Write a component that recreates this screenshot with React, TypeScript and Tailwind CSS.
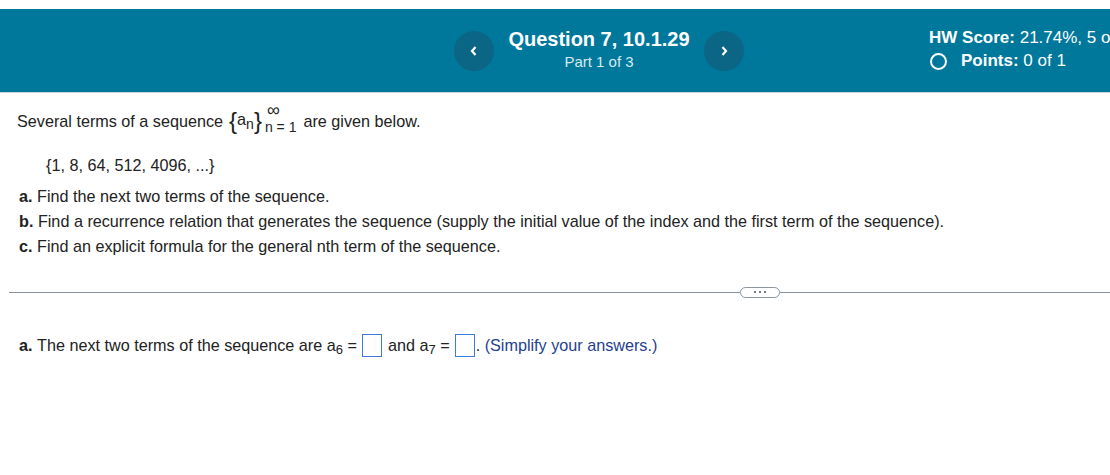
import React from "react";

const Header: React.FC = () => {
  return (
    <div className="mt-[9px] h-[84px] bg-[#00789c] border-b border-[#c5d6df] flex items-center">
      <div className="ml-[454px] flex items-center">
        <button className="w-10 h-10 rounded-full bg-[#0b6585] flex items-center justify-center text-white">
          <svg width="10" height="12" viewBox="0 0 10 12">
            <path d="M6.5 2 L3 6 L6.5 10" stroke="white" strokeWidth="2.2" fill="none" />
          </svg>
        </button>
        <div className="w-[210px] flex flex-col items-center -mt-[2px]">
          <div className="text-[20px] font-bold text-white leading-[22px]">Question 7, 10.1.29</div>
          <div className="text-[15px] text-[#d6eaf2] leading-[18px] mt-[3px]">Part 1 of 3</div>
        </div>
        <button className="w-10 h-10 rounded-full bg-[#0b6585] flex items-center justify-center text-white">
          <svg width="10" height="12" viewBox="0 0 10 12">
            <path d="M3.5 2 L7 6 L3.5 10" stroke="white" strokeWidth="2.2" fill="none" />
          </svg>
        </button>
      </div>
      <div className="ml-[185px] flex flex-col text-white text-[17px] whitespace-nowrap -mt-[2px]">
        <div className="leading-[20px]">
          <span className="font-bold">HW Score:</span> 21.74%, 5 of 23
        </div>
        <div className="flex items-center leading-[20px] mt-[3px]">
          <span className="w-[17px] h-[17px] rounded-full border-2 border-white inline-block mr-[14px] ml-[1px]"></span>
          <span className="font-bold">Points:</span>&nbsp;0 of 1
        </div>
      </div>
    </div>
  );
};

const AnswerBox: React.FC<{ last?: boolean }> = ({ last }) => (
  <span
    className={
      last
        ? "inline-block w-[20px] h-[23px] border border-[#3d7bd9] align-middle bg-white ml-[5px] mr-[1px]"
        : "inline-block w-[20px] h-[23px] border border-[#3d7bd9] align-middle bg-white ml-[5px] mr-[6px]"
    }
  ></span>
);

export default function App() {
  return (
    <div
      className="w-[1110px] h-[475px] bg-white overflow-hidden text-[#222]"
      style={{ fontFamily: '"Liberation Sans", Arial, sans-serif' }}
    >
      <Header />
      <div className="pl-[17px] pt-[14px] text-[16.2px]">
        <div className="flex items-center h-[28px]">
          <span>Several terms of a sequence</span>
          <span className="ml-[6px] inline-flex items-center">
            <span className="text-[24px] leading-none font-light">{"{"}</span>
            <span className="relative top-[-2px]">a</span>
            <span className="text-[14px] relative top-[3px]">n</span>
            <span className="text-[24px] leading-none font-light">{"}"}</span>
            <span className="inline-flex flex-col items-start ml-[3px] leading-none">
              <span className="text-[18px] ml-[2px] -mt-[8px]">∞</span>
              <span className="text-[14px] mt-[1px]">n = 1</span>
            </span>
          </span>
          <span className="ml-[7px]">are given below.</span>
        </div>
        <div className="pl-[29px] mt-[20px] leading-[20px]">{"{"}1, 8, 64, 512, 4096, ...{"}"}</div>
        <div className="mt-[9px] pl-[2px] leading-[25px]">
          <div><span className="font-bold">a.</span> Find the next two terms of the sequence.</div>
          <div><span className="font-bold">b.</span> Find a recurrence relation that generates the sequence (supply the initial value of the index and the first term of the sequence).</div>
          <div><span className="font-bold">c.</span> Find an explicit formula for the general nth term of the sequence.</div>
        </div>
      </div>
      <div className="ml-[9px] mt-[27px] flex items-center h-[12px]">
        <div className="w-[731px] h-px bg-[#8a959d]"></div>
        <div className="w-[40px] h-[11px] rounded-full border border-[#8a959d] flex items-center justify-center gap-[3px]">
          <span className="w-[2px] h-[2px] bg-[#44505a] rounded-full"></span>
          <span className="w-[2px] h-[2px] bg-[#44505a] rounded-full"></span>
          <span className="w-[2px] h-[2px] bg-[#44505a] rounded-full"></span>
        </div>
        <div className="flex-1 h-px bg-[#8a959d]"></div>
      </div>
      <div className="pl-[19px] mt-[35px] text-[16.2px] flex items-center">
        <span className="font-bold">a.</span>
        <span>&nbsp;The next two terms of the sequence are a</span>
        <span className="text-[13px] relative top-[5px]">6</span>
        <span>&nbsp;=</span>
        <AnswerBox />
        <span>and a</span>
        <span className="text-[13px] relative top-[5px]">7</span>
        <span>&nbsp;=</span>
        <AnswerBox last />
        <span>.&nbsp;</span>
        <span className="text-[#1f3f8f]">(Simplify your answers.)</span>
      </div>
    </div>
  );
}
